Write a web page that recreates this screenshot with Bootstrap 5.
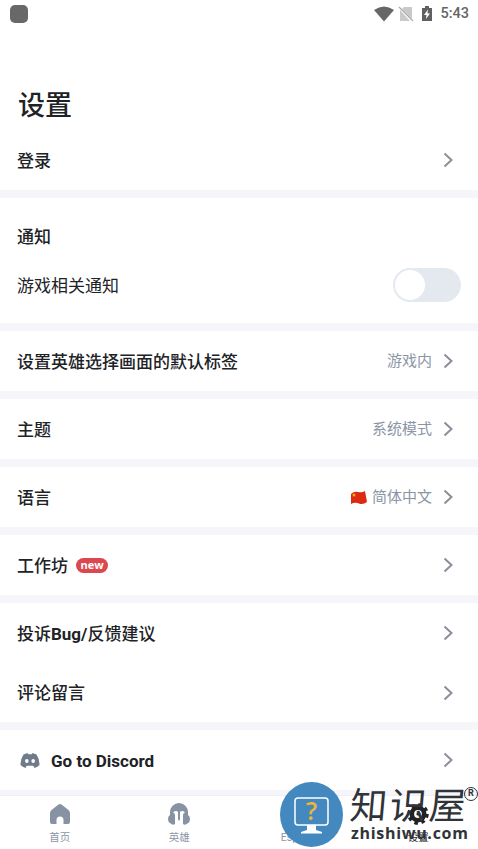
<!DOCTYPE html>
<html lang="zh-CN">
<head>
<meta charset="utf-8">
<meta name="viewport" content="width=device-width, initial-scale=1">
<title>设置</title>
<link href="https://cdn.jsdelivr.net/npm/bootstrap@5.3.0/dist/css/bootstrap.min.css" rel="stylesheet">
<style>
body{font-family:Roboto,"Noto Sans CJK SC",sans-serif;color:#202226;background:#fff;height:849px;overflow:hidden}
svg{display:block;flex:none}
.status{height:27px;padding:0 9px 0 10px;color:#666;font-size:14.5px;font-weight:500}
.app-dot{width:18px;height:18px;border-radius:5px;background:#686868}
.page-title{font-size:27px;line-height:40px;font-weight:500;margin:0;padding:59px 18px 0;height:103px}
.band{background:#f5f5fa;height:8px}
.item{height:60px;padding:0 22px 0 17px;font-size:17px;font-weight:500}
.label{padding-top:3px}
.item-latin{font-weight:700;font-size:17px;letter-spacing:0}
.hint{font-size:15px;font-weight:400;color:#8b95a5;margin-right:8px;padding-top:1px}
.pill{background:#dc4850;font:700 11px/14px "Open Sans",sans-serif;width:32px;height:15px;margin-left:8px;padding:0}
.notify{height:125px}
.item-toggle{height:54px;padding-right:17px;font-weight:400}
.item-short{height:59px}
.switch-track{width:68px;height:34px;background:#e4e9f0;padding:2px}
.knob{width:30px;height:30px;background:#fff}
.band-thin{height:5px}
.tabs{height:54px;font-size:10.5px;color:#8c97a7;border-top:1px solid #efeff6}
.tab{width:119.5px;padding-top:7px;line-height:14px}
.tab svg{margin-bottom:6px}
.on{color:#202226}
.discord{margin:0 11px 0 3px}
.watermark{left:280px;top:782px;width:198px;height:66px;color:#303338}
.wm-title{left:70px;top:3px;font-size:37px;line-height:44px;font-weight:400;letter-spacing:2.5px;transform:skewX(-5deg)}
.wm-url{left:71px;top:41px;font:700 16px/20px "Open Sans",sans-serif;letter-spacing:.7px}
.wm-reg{left:184px;top:5px;width:14px;height:14px;border:1.5px solid #303338;font:700 9px/11px Roboto,sans-serif}
</style>
<script src="https://cdn.jsdelivr.net/npm/bootstrap@5.3.0/dist/js/bootstrap.bundle.min.js"></script>
</head>
<body>
<svg width="0" height="0" class="position-absolute"><defs><symbol id="chev" viewBox="0 0 16 18"><path d="M4.500 2.500 11.500 9l-7 6.500" fill="none" stroke="#8a8f9a" stroke-width="2"/></symbol></defs></svg>
<header class="status d-flex align-items-center justify-content-between">
  <span class="app-dot"></span>
  <div class="d-flex align-items-center">
    <svg width="20" height="16" viewBox="0 0 20 16"><path d="M0 4Q10-3 20 4L10 15.500Z" fill="#666"/></svg>
    <svg class="ms-1" width="16" height="16" viewBox="0 0 16 16"><path d="M6 1h8v12L4 3ZM2 4l10 11H2Z" fill="#c9c9c9"/><path d="m1 1 14 14" stroke="#aaa" stroke-width="1.300"/></svg>
    <svg class="ms-2" width="10" height="16" viewBox="0 0 10 16"><path d="M0 2h3V0h4v2h3v13H0Z" fill="#606060"/><path d="M6 3.500 2 9h2.500L4 13l4-5.500H5.500Z" fill="#fff"/></svg>
    <span class="ms-2">5:43</span>
  </div>
</header>
<main>
  <h1 class="page-title">设置</h1>
  <div class="item d-flex align-items-center justify-content-between"><span class="label">登录</span><svg width="16" height="18"><use href="#chev"/></svg></div>
  <div class="band"></div>
  <section class="notify d-flex flex-column">
    <div class="item d-flex align-items-center pt-3"><span class="label">通知</span></div>
    <div class="item item-toggle d-flex align-items-center justify-content-between"><span class="label">游戏相关通知</span><span class="switch-track rounded-pill"><span class="knob d-block rounded-circle"></span></span></div>
  </section>
  <div class="band"></div>
  <div class="item d-flex align-items-center"><span class="label me-auto">设置英雄选择画面的默认标签</span><span class="hint">游戏内</span><svg width="16" height="18"><use href="#chev"/></svg></div>
  <div class="band"></div>
  <div class="item d-flex align-items-center"><span class="label me-auto">主题</span><span class="hint">系统模式</span><svg width="16" height="18"><use href="#chev"/></svg></div>
  <div class="band"></div>
  <div class="item d-flex align-items-center"><span class="label me-auto">语言</span>
    <svg class="me-1" width="18" height="15" viewBox="0 0 18 15"><path d="M1 4Q4 1 8 2t7-1l2 11q-4 3-8 1.500T1 14Z" fill="#db2c12"/><path d="m4 3 .6 1.300 1.400.1-1 1 .3 1.400L4 6.100l-1.300.7.300-1.400-1-1 1.400-.1Z" fill="#ffb31a"/></svg>
    <span class="hint">简体中文</span><svg width="16" height="18"><use href="#chev"/></svg></div>
  <div class="band"></div>
  <div class="item d-flex align-items-center"><span class="label">工作坊</span><span class="pill badge rounded-pill">new</span><svg class="ms-auto" width="16" height="18"><use href="#chev"/></svg></div>
  <div class="band"></div>
  <div class="item d-flex align-items-center justify-content-between"><span class="label">投诉<b>Bug/</b>反馈建议</span><svg width="16" height="18"><use href="#chev"/></svg></div>
  <div class="item item-short d-flex align-items-center justify-content-between"><span class="label">评论留言</span><svg width="16" height="18"><use href="#chev"/></svg></div>
  <div class="band"></div>
  <div class="item item-latin d-flex align-items-center">
    <svg class="discord" width="20" height="15" viewBox="0 0 19 15"><path d="M3 1.500 7 0l.8 1.300h3.400L12 0l4 1.500Q19 6 19 12q-2 2-5 3l-1.200-2.200H6.200L5 15q-3-1-5-3Q0 6 3 1.500Z" fill="#6f7b8b"/><ellipse cx="6.300" cy="8" rx="1.800" ry="2" fill="#fff"/><ellipse cx="12.700" cy="8" rx="1.800" ry="2" fill="#fff"/></svg>
    <span class="label">Go to Discord</span><svg class="ms-auto" width="16" height="18"><use href="#chev"/></svg></div>
  <div class="band band-thin"></div>
</main>
<nav class="tabs d-flex">
  <div class="tab d-flex flex-column align-items-center"><svg width="22" height="22" viewBox="0 0 22 22"><path d="M2.500 7 9.500 1.500q1.500-1 3 0l7 5.500q1.500 1.300 1.500 3V19q0 2-2 2h-4.500v-4a3.500 3.500 0 0 0-7 0v4H3q-2 0-2-2v-9q0-1.700 1.500-3Z" fill="#8793a2"/></svg>首页</div>
  <div class="tab d-flex flex-column align-items-center"><svg width="22" height="22" viewBox="0 0 22 22"><path d="M2 12V9a9 9 0 0 1 18 0v3q2 1 2 4t-2 4q-3 3-5 1V12q0-2 2-2.500Q14 7 12 9v7q0 1.500-1 1.500T10 16V9Q8 7 5 9.500q2 .5 2 2.500v9q-2 2-5-1-2-1-2-4t2-4Z" fill="#8793a2"/></svg>英雄</div>
  <div class="tab d-flex flex-column align-items-center"><svg width="22" height="22" viewBox="0 0 22 22"><path d="M5 2h12v8q0 6-6 6t-6-6Z" fill="#8793a2"/></svg>Esports</div>
  <div class="tab on d-flex flex-column align-items-center"><svg width="22" height="22" viewBox="0 0 22 22"><circle cx="11" cy="11" r="9" fill="none" stroke="#202226" stroke-width="3.500" stroke-dasharray="3.534 3.534"/><circle cx="11" cy="11" r="6.200" fill="none" stroke="#202226" stroke-width="4.600"/><circle cx="11" cy="11" r="1.600" fill="#202226"/></svg>设置</div>
</nav>
<div class="watermark position-absolute">
  <svg width="64" height="66" viewBox="0 0 64 66"><ellipse cx="31.500" cy="32.500" rx="31.500" ry="32.500" fill="#4389c0"/><rect x="15" y="16" width="33" height="27" rx="3" fill="none" stroke="#fff" stroke-width="1.500"/><path d="M27 43h9v5l6 2v1.500H21V50l6-2Z" fill="#fff"/><text x="31.500" y="38" text-anchor="middle" font-family="Open Sans,sans-serif" font-size="25" font-weight="600" fill="#efb23b">?</text></svg>
  <span class="wm-title position-absolute text-nowrap">知识屋</span>
  <span class="wm-url position-absolute text-nowrap">zhishiwu.com</span>
  <span class="wm-reg position-absolute rounded-circle text-center">R</span>
</div>
</body>
</html>
